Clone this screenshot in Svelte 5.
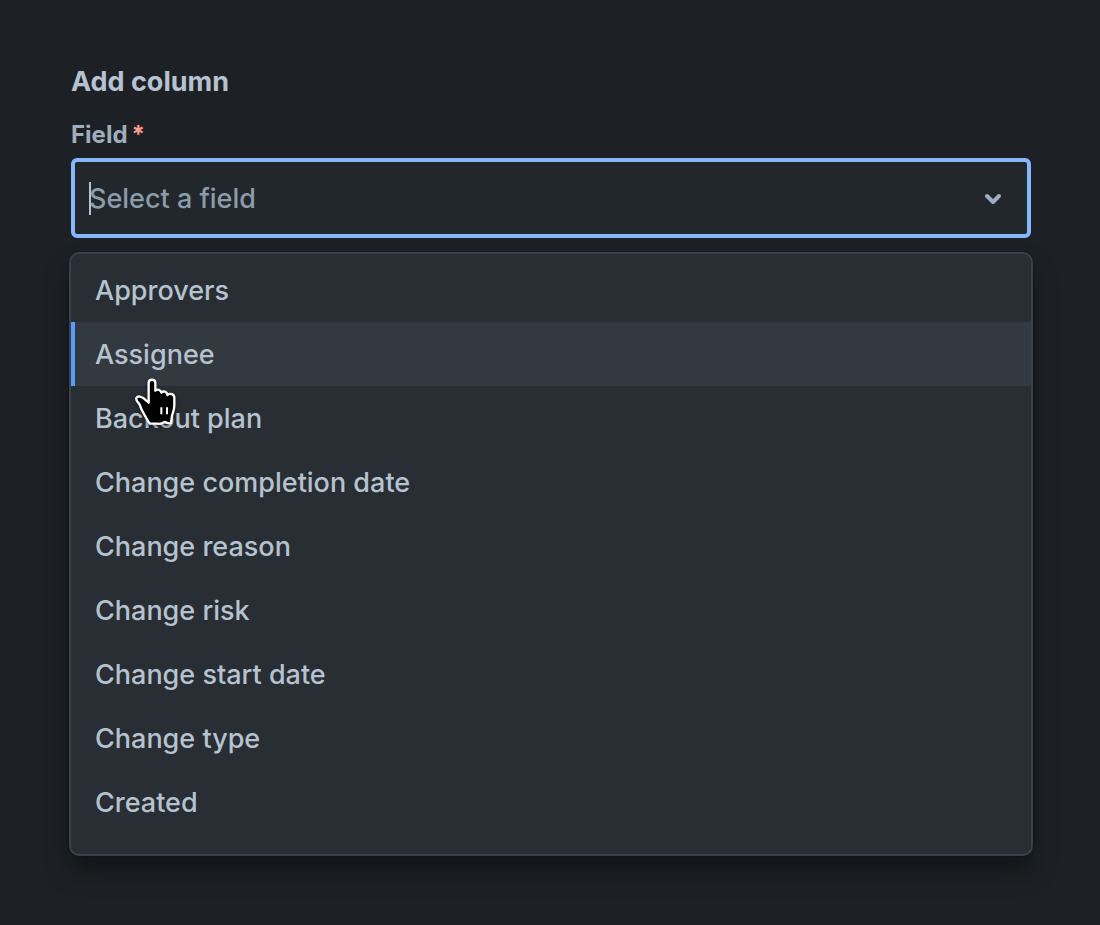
<script>
  const fields = [
    "Approvers",
    "Assignee",
    "Backout plan",
    "Change completion date",
    "Change reason",
    "Change risk",
    "Change start date",
    "Change type",
    "Created",
  ];

  let query = $state("");
  let active = $state(1);

  function pick(i) {
    active = i;
    query = fields[i];
  }

  function onKey(e) {
    if (e.key === "ArrowDown") { e.preventDefault(); active = Math.min(fields.length - 1, active + 1); }
    if (e.key === "ArrowUp")   { e.preventDefault(); active = Math.max(0, active - 1); }
    if (e.key === "Enter")     { e.preventDefault(); pick(active); }
  }
</script>

<main class="panel">
  <h1>Add column</h1>
  <label for="field">Field<span class="required" aria-hidden="true">*</span></label>

  <div class="control">
    <input
      id="field"
      type="text"
      role="combobox"
      aria-expanded="true"
      aria-controls="field-options"
      aria-activedescendant="field-option-{active}"
      placeholder="Select a field"
      autocomplete="off"
      required
      bind:value={query}
      onkeydown={onKey}
    />
    {#if !query}
      <span class="caret"></span>
    {/if}
    <svg class="chevron" viewBox="0 0 20 20" aria-hidden="true">
      <path d="M4 8 10 14l6-6" />
    </svg>
  </div>

  <div class="menu" id="field-options" role="listbox" aria-label="Field">
    {#each fields as field, i}
      <button
        class="option"
        class:active={i === active}
        id="field-option-{i}"
        type="button"
        role="option"
        aria-selected={i === active}
        tabindex="-1"
        onmouseenter={() => active = i}
        onclick={() => pick(i)}
      >
        {field}
        {#if i === active}
          <!-- hand pointer over the hovered option -->
          <svg class="pointer" viewBox="30 30 150 150" aria-hidden="true">
            <path
              class="hand"
              d="M86 54C86 41 106 41 106 54V77C111 71 123 74 124 83C130 76 141 80 142 90C150 83 163 88 163 98V121C163 136 158 144 156 152L153 174C146 178 138 171 133 171C127 176 118 177 112 176H90C84 171 81 162 76 154C69 143 63 134 59 119C55 112 46 106 49 99C53 92 64 94 71 100L86 113Z"
            />
            <path class="crease" d="M124 127V148M141 127V148" />
          </svg>
        {/if}
      </button>
    {/each}
  </div>
</main>

<style>
  :global(body) {
    background: #1d2125;
  }
  .panel {
    padding: 64px 69px 69px 71px;
    font-family: Inter, "Liberation Sans", sans-serif;
    font-size: 27px;
    font-weight: 450;
    color: #b6c2cf;
  }
  h1 {
    margin: 0 0 17px;
    font-size: 27px;
    font-weight: 700;
    line-height: 36px;
  }
  label {
    display: block;
    margin-bottom: 5px;
    font-size: 24px;
    font-weight: 700;
    line-height: 36px;
    color: #9fadbc;
  }
  .required {
    margin-left: 4px;
    color: #ff9c8f;
  }
  .control {
    position: relative;
    display: flex;
    align-items: center;
    height: 80px;
    padding: 0 24px 0 14px;
    box-sizing: border-box;
    background: #22272b;
    border: 4px solid #85b8ff;
    border-radius: 6px;
  }
  input {
    flex: 1;
    min-width: 0;
    padding: 2px 0 0;
    border: 0;
    outline: none;
    background: transparent;
    color: #b6c2cf;
    font: inherit;
    line-height: 40px;
  }
  input::placeholder {
    color: #8c9bab;
    opacity: 1;
  }
  .caret {
    position: absolute;
    left: 14px;
    top: 20px;
    width: 2px;
    height: 33px;
    background: #b6c2cf;
  }
  .chevron {
    width: 20px;
    height: 20px;
    fill: none;
    stroke: #9fadbc;
    stroke-width: 4;
    stroke-linecap: round;
    stroke-linejoin: round;
  }
  .menu {
    margin: 14px -2px 0;
    padding: 4px 0 20px;
    background: #282e33;
    border: 2px solid #39424a;
    border-radius: 10px;
    box-shadow: 0 16px 24px rgba(3, 4, 4, 0.36), 0 0 2px rgba(3, 4, 4, 0.5);
  }
  .option {
    position: relative;
    display: block;
    width: 100%;
    padding: 13px 20px 11px;
    border: 0;
    border-left: 4px solid transparent;
    background: transparent;
    color: inherit;
    font: inherit;
    line-height: 40px;
    text-align: left;
    cursor: pointer;
  }
  .option.active {
    background: #323940;
    border-left-color: #579dff;
  }
  .pointer {
    position: absolute;
    left: 55px;
    top: 53px;
    z-index: 1;
    width: 50px;
    height: 50px;
    overflow: visible;
    filter: drop-shadow(0 2px 2px rgba(0, 0, 0, 0.4));
  }
  .hand {
    fill: #000;
    stroke: #fff;
    stroke-width: 7;
    stroke-linejoin: round;
  }
  .crease {
    fill: none;
    stroke: #fff;
    stroke-width: 6;
  }
</style>
